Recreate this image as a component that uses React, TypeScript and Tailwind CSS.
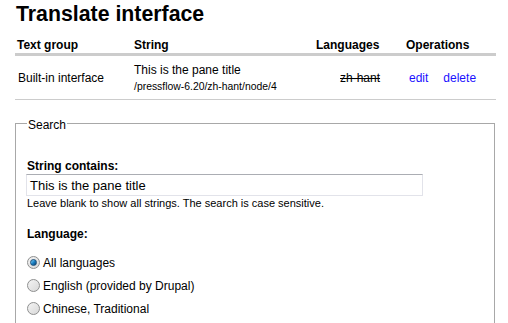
import React from "react";

const columns = "grid grid-cols-[117px_182px_90px_92px]";

function Radio({ checked, label }: { checked?: boolean; label: string }) {
  return (
    <div className="flex h-[23px] items-center">
      <span className="flex h-[13px] w-[13px] items-center justify-center rounded-full border border-[#8e8f8f] bg-gradient-to-br from-[#f4f4f4] to-[#d8d8d8]">
        {checked && (
          <span className="h-[7px] w-[7px] rounded-full border border-[#1a4f7a] bg-gradient-to-br from-[#7fd2f8] via-[#1b83c6] to-[#0c3f6d]" />
        )}
      </span>
      <span className="ml-[3px] text-[12px] leading-[14px]">{label}</span>
    </div>
  );
}

export default function App() {
  return (
    <div
      className="min-h-screen bg-white px-[15px] text-black"
      style={{ fontFamily: '"Liberation Sans", Arial, sans-serif' }}
    >
      <h2 className="h-[36px] pl-[1px] pt-[2px] text-[21.3px] font-bold leading-[25px]">
        Translate interface
      </h2>

      <div className="w-[481px]">
        <div
          className={`${columns} h-[20px] items-center border-b-[3px] border-[#cccccc] text-[12px] font-bold leading-[14px]`}
        >
          <div className="pl-[2px]">Text group</div>
          <div className="pl-[2px]">String</div>
          <div className="pl-[2px]">Languages</div>
          <div className="pl-[2px]">Operations</div>
        </div>
        <div
          className={`${columns} h-[44px] items-center border-b border-[#cccccc] pt-[1px] text-[12px] leading-[14px]`}
        >
          <div className="pl-[3px]">Built-in interface</div>
          <div className="pl-[2px]">
            <div>This is the pane title</div>
            <div className="mt-[3px] text-[10.4px]">/pressflow-6.20/zh-hant/node/4</div>
          </div>
          <div className="pl-[26px] line-through">zh-hant</div>
          <div className="flex gap-[15px] pl-[5px] text-[#1a10ff]">
            <a href="#">edit</a>
            <a href="#">delete</a>
          </div>
        </div>
      </div>

      <fieldset className="mt-[15px] w-[480px] border border-[#a8a8a8] px-[11px] pb-[20px]">
        <legend className="px-[1px] pt-[3px] text-[12px] leading-[14px]">Search</legend>

        <div className="pt-[27px]">
          <div className="text-[12px] font-bold leading-[14px]">String contains:</div>
          <div className="mt-[1px] flex h-[22px] w-[397px] -ml-[1px] items-center border border-[#e2e3ea] border-t-[#abadb3] pl-[3px] text-[13px] leading-[15px]">
            This is the pane title
          </div>
          <div className="pt-[1px] text-[11px] leading-[13px]">
            Leave blank to show all strings. The search is case sensitive.
          </div>

          <div className="mt-[17px] text-[12px] font-bold leading-[14px]">Language:</div>
          <div className="mt-[10px]">
            <Radio checked label="All languages" />
            <Radio label="English (provided by Drupal)" />
            <Radio label="Chinese, Traditional" />
          </div>
        </div>
      </fieldset>
    </div>
  );
}
